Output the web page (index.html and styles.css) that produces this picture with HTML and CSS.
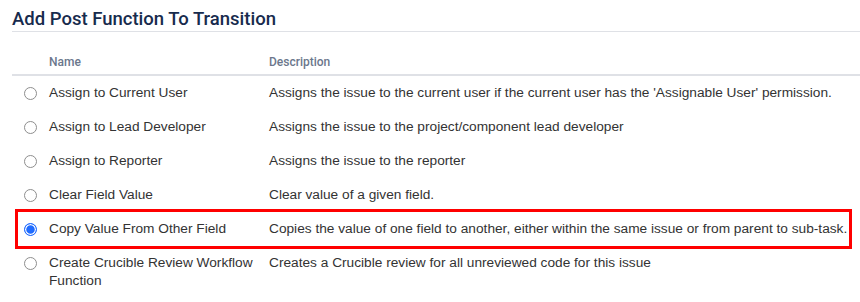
FILE: index.html
```html
<!DOCTYPE html>
<html>
<head>
  <title>Add Post Function To Transition</title>
  <link rel="stylesheet" href="styles.css">
</head>

<body>
  <div class="page">
    <h2 class="page-title">Add Post Function To Transition</h2>

    <div class="functions">
      <div class="row head">
        <div></div>
        <div>Name</div>
        <div>Description</div>
      </div>

      <label class="row">
        <span><input type="radio" name="postfunction"></span>
        <span>Assign to Current User</span>
        <span>Assigns the issue to the current user if the current user has the 'Assignable User' permission.</span>
      </label>
      <label class="row">
        <span><input type="radio" name="postfunction"></span>
        <span>Assign to Lead Developer</span>
        <span>Assigns the issue to the project/component lead developer</span>
      </label>
      <label class="row">
        <span><input type="radio" name="postfunction"></span>
        <span>Assign to Reporter</span>
        <span>Assigns the issue to the reporter</span>
      </label>
      <label class="row">
        <span><input type="radio" name="postfunction"></span>
        <span>Clear Field Value</span>
        <span>Clear value of a given field.</span>
      </label>
      <!-- highlighted choice -->
      <label class="row marked">
        <span><input type="radio" name="postfunction" checked></span>
        <span>Copy Value From Other Field</span>
        <span>Copies the value of one field to another, either within the same issue or from parent to sub-task.</span>
      </label>
      <label class="row">
        <span><input type="radio" name="postfunction"></span>
        <span>Create Crucible Review Workflow Function</span>
        <span>Creates a Crucible review for all unreviewed code for this issue</span>
      </label>
    </div>
  </div>
</body>

</html>
```

FILE: styles.css
```css
body {
  font-family: "Liberation Sans", Arial, sans-serif;
  background-color: #fff;
  color: #333;
  margin: 0;
}

.page {
  padding: 8px 0 0 12px;
}

.page-title {
  margin: 0;
  font-family: Roboto, "Liberation Sans", sans-serif;
  font-size: 18.5px;
  font-weight: 500;
  line-height: 23px;
  color: #172b4d;
  border-bottom: 1px solid #dfe1e6;
}

.functions {
  margin-top: 17px;
}

.row {
  display: grid;
  grid-template-columns: 37px 220px 1fr;
  font-size: 13.7px;
  line-height: 18px;
  padding: 8px 0;
  white-space: nowrap;
}

.row span:nth-child(2) {
  white-space: normal;
  padding-right: 4px;
}

.row span:first-child {
  display: flex;
  align-items: flex-start;
  padding-left: 12px;
}

.row.head {
  font-family: Roboto, "Liberation Sans", sans-serif;
  font-size: 12px;
  font-weight: 500;
  color: #6b778c;
  padding: 4px 0 3px;
  border-bottom: 2px solid #dfe1e6;
}

.row.marked {
  margin: 0 11px 0 6px;
  grid-template-columns: 31px 220px 1fr;
  outline: 3px solid #ff0000;
}

.row.marked span:first-child {
  padding-left: 6px;
}

input[type="radio"] {
  appearance: none;
  width: 13px;
  height: 13px;
  margin: 3px 0 0 0;
  border: 1px solid #8e8e8e;
  border-radius: 50%;
  background-color: #fff;
}

input[type="radio"]:checked {
  border: 1.5px solid #1f6bff;
  background-color: #1f6bff;
  box-shadow: inset 0 0 0 1.2px #fff;
}
```
